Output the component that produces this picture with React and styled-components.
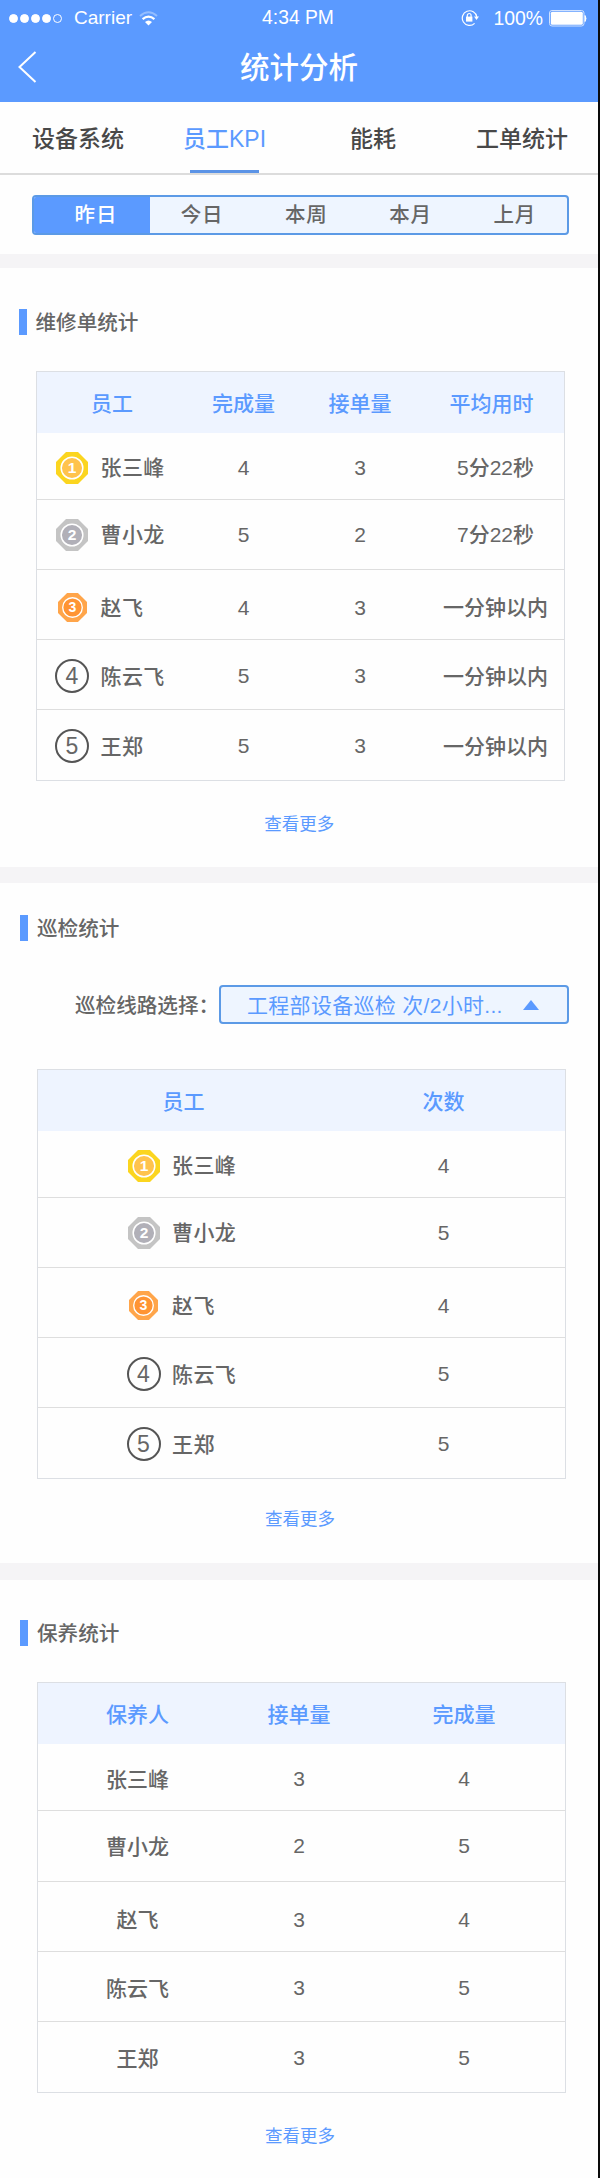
import React, { useState } from 'react';
import styled, { createGlobalStyle } from 'styled-components';

const tabs = [
  { label: '设备系统', width: 156 },
  { label: '员工KPI', width: 137 },
  { label: '能耗', width: 160 },
  { label: '工单统计', width: 138 },
];

const periods = ['昨日', '今日', '本周', '本月', '上月'];

const names = ['张三峰', '曹小龙', '赵飞', '陈云飞', '王郑'];
const repairRows = [
  ['4', '3', '5分22秒'],
  ['5', '2', '7分22秒'],
  ['4', '3', '一分钟以内'],
  ['5', '3', '一分钟以内'],
  ['5', '3', '一分钟以内'],
];
const patrolRows = [['4'], ['5'], ['4'], ['5'], ['5']];
const maintainRows = [
  ['3', '4'],
  ['2', '5'],
  ['3', '4'],
  ['3', '5'],
  ['3', '5'],
];

const medals = [
  { outer: '#fbd51f', inner: '#ffc34d', size: 32 },
  { outer: '#c4c4c4', inner: '#b1b0b8', size: 32 },
  { outer: '#ffa54a', inner: '#ff9433', size: 29 },
];

function Rank({ rank }) {
  const medal = medals[rank - 1];
  if (!medal) {
    return <Circle>{rank}</Circle>;
  }
  return (
    <Medal width={medal.size} height={medal.size} viewBox="0 0 32 32">
      <polygon
        points="10,0 22,0 32,10 32,22 22,32 10,32 0,22 0,10"
        fill={medal.outer}
      />
      <circle
        cx="16"
        cy="16"
        r="10.8"
        fill={medal.inner}
        stroke="#fff"
        strokeWidth="1.5"
      />
      <text x="16" y="21.4" textAnchor="middle">
        {rank}
      </text>
    </Medal>
  );
}

function RankTable({ columns, heads, rows, ranked, padLeft, heights, tops }) {
  return (
    <Table>
      <HeadRow $columns={columns}>
        {heads.map(head => (
          <Cell key={head}>{head}</Cell>
        ))}
      </HeadRow>
      {rows.map((row, i) => (
        <Row
          key={names[i]}
          $columns={columns}
          $height={heights[i]}
          $top={tops[i]}
        >
          {ranked ? (
            <Person $left={padLeft}>
              <RankSlot>
                <Rank rank={i + 1} />
              </RankSlot>
              <Name>{names[i]}</Name>
            </Person>
          ) : (
            <Cell $bottom={3}>{names[i]}</Cell>
          )}
          {row.map((value, j) => (
            <Cell key={j} $left={j === 2 ? 8 : 0} $bottom={j === 2 ? 3 : 0}>
              {value}
            </Cell>
          ))}
        </Row>
      ))}
    </Table>
  );
}

export default function App() {
  const [tab, setTab] = useState('员工KPI');
  const [period, setPeriod] = useState('昨日');

  return (
    <Page>
      <GlobalStyle />
      <Header>
        <StatusBar>
          <Carrier>
            <Signal>
              <Dot $full />
              <Dot $full />
              <Dot $full />
              <Dot $full />
              <Dot />
            </Signal>
            Carrier
            <svg width="19" height="15" viewBox="0 0 19 15" fill="none">
              <path
                d="M1 5Q9.5 -2.5 18 5"
                stroke="#fff"
                strokeOpacity="0.35"
                strokeWidth="2"
              />
              <path d="M3.6 8.2Q9.5 3 15.4 8.2" stroke="#fff" strokeWidth="2.2" />
              <path d="M6 11Q9.5 8 13 11L9.5 14.6Z" fill="#fff" />
            </svg>
          </Carrier>
          <Clock>4:34 PM</Clock>
          <Power>
            <svg width="18" height="18" viewBox="0 0 18 18" fill="none">
              <path
                d="M13.6 14.4A7.3 7.3 0 1 1 15.8 8"
                stroke="#fff"
                strokeWidth="1.2"
              />
              <path d="M13 7.6H18L15.5 11Z" fill="#fff" />
              <rect x="5" y="7.6" width="6.4" height="5" fill="#fff" />
              <path
                d="M6.3 8V6.4A1.9 1.9 0 0 1 10.1 6.4V8"
                stroke="#fff"
                strokeWidth="1.2"
              />
            </svg>
            <Percent>100%</Percent>
            <svg width="38" height="17" viewBox="0 0 38 17">
              <rect
                x="0.5"
                y="0.5"
                width="34.5"
                height="15.5"
                rx="2.5"
                fill="none"
                stroke="#cfe1ff"
              />
              <rect x="1.8" y="1.8" width="32" height="13" rx="1.5" fill="#fff" />
              <path d="M36 5.5Q38 8.5 36 11.5Z" fill="#fff" stroke="#fff" />
            </svg>
          </Power>
        </StatusBar>
        <NavBar>
          <Back width="19" height="32" viewBox="0 0 19 32">
            <path d="M17.5 1L1.5 16L17.5 31" />
          </Back>
          <Title>统计分析</Title>
        </NavBar>
      </Header>

      <Tabs>
        {tabs.map(({ label, width }) => (
          <Tab
            key={label}
            $width={width}
            $active={label === tab}
            onClick={() => setTab(label)}
          >
            {label}
          </Tab>
        ))}
      </Tabs>

      <Filter>
        <Periods>
          {periods.map(item => (
            <Period
              key={item}
              $active={item === period}
              onClick={() => setPeriod(item)}
            >
              {item}
            </Period>
          ))}
        </Periods>
      </Filter>
      <Band $height={14} />

      <Section $height={599} $left={0.5}>
        <SectionTitle $top={41}>维修单统计</SectionTitle>
        <TableWrap $top={36}>
          <RankTable
            columns="151px 112px 121px 142px"
            heads={['员工', '完成量', '接单量', '平均用时']}
            rows={repairRows}
            ranked
            padLeft={18}
            heights={[66, 70, 70, 70, 71]}
            tops={[3, 0, 6, 3, 2]}
          />
        </TableWrap>
        <More $top={30}>查看更多</More>
      </Section>
      <Band $height={16} />

      <Section $height={680} $left={2}>
        <SectionTitle $top={32}>巡检统计</SectionTitle>
        <RouteRow>
          <RouteLabel>巡检线路选择：</RouteLabel>
          <Select>
            <span>工程部设备巡检 次/2小时...</span>
            <Arrow />
          </Select>
        </RouteRow>
        <TableWrap $top={45}>
          <RankTable
            columns="291px 229px"
            heads={['员工', '次数']}
            rows={patrolRows}
            ranked
            padLeft={88}
            heights={[66, 70, 70, 70, 71]}
            tops={[3, 0, 6, 3, 2]}
          />
        </TableWrap>
        <More $top={27}>查看更多</More>
      </Section>
      <Band $height={17} />

      <Section $height={598} $left={2}>
        <SectionTitle $top={40}>保养统计</SectionTitle>
        <TableWrap $top={36}>
          <RankTable
            columns="199px 124px 206px"
            heads={['保养人', '接单量', '完成量']}
            rows={maintainRows}
            heights={[66, 71, 70, 70, 71]}
            tops={[4, 0, 6, 3, 2]}
          />
        </TableWrap>
        <More $top={30}>查看更多</More>
      </Section>
    </Page>
  );
}

const GlobalStyle = createGlobalStyle`
  * {
    box-sizing: border-box;
  }
  body {
    margin: 0;
    background: #fefefe;
    color: #666;
    font-family: 'Liberation Sans', 'Noto Sans CJK SC', sans-serif;
    font-size: 21px;
    font-weight: 500;
  }
  button {
    border: 0;
    padding: 0;
    background: none;
    color: inherit;
    font: inherit;
  }
`;

const Page = styled.div`
  width: 600px;
  height: 2178px;
  overflow: hidden;
  border-right: 2px solid #0b0b0b;
`;

const Header = styled.header`
  height: 102px;
  background: #5b9aff;
  color: #fff;
`;

const StatusBar = styled.div`
  display: grid;
  grid-template-columns: 1fr auto 1fr;
  align-items: center;
  height: 36px;
  padding: 0 11px 0 9px;
  font-size: 19px;
`;

const Carrier = styled.div`
  display: flex;
  align-items: center;
  gap: 7px;
`;

const Signal = styled.div`
  display: flex;
  gap: 2px;
  margin-right: 5px;
`;

const Dot = styled.i`
  width: 9px;
  height: 9px;
  border: 1px solid #fff;
  border-radius: 50%;
  background: ${({ $full }) => ($full ? '#fff' : 'transparent')};
`;

const Clock = styled.div`
  font-size: 19.3px;
`;

const Power = styled.div`
  display: flex;
  align-items: center;
  justify-content: flex-end;
`;

const Percent = styled.span`
  margin: 0 6px 0 14px;
  font-size: 19.4px;
`;

const NavBar = styled.div`
  display: grid;
  grid-template-columns: 60px 1fr 60px;
  align-items: center;
  height: 62px;
`;

const Back = styled.svg`
  margin-left: 18px;
  fill: none;
  stroke: #fff;
  stroke-width: 2;
`;

const Title = styled.h1`
  margin: 0;
  padding-top: 2px;
  font-size: 29.5px;
  font-weight: 500;
  line-height: 40px;
  text-align: center;
`;

const Tabs = styled.nav`
  display: flex;
  height: 73px;
  border-bottom: 2px solid #dcdcdc;
`;

const Tab = styled.button`
  display: flex;
  flex-direction: column;
  align-items: center;
  justify-content: space-between;
  width: ${({ $width }) => $width}px;
  padding-top: 20px;
  color: ${({ $active }) => ($active ? '#5b9aff' : '#484848')};
  font-size: 23px;
  line-height: 35px;
  white-space: nowrap;

  &::after {
    content: '';
    width: 69px;
    height: 3px;
    background: ${({ $active }) => ($active ? '#5b93e6' : 'transparent')};
  }
`;

const Filter = styled.div`
  height: 79px;
  padding: 20px 29px 0 32px;
`;

const Periods = styled.div`
  display: flex;
  height: 40px;
  overflow: hidden;
  border: 2px solid #5c9ae6;
  border-radius: 4px;
  background: #eef5ff;
`;

const Period = styled.button`
  flex: ${({ $active }) => ($active ? '0 0 116px' : '1')};
  padding: 0 0 4px ${({ $active }) => ($active ? '8px' : '0')};
  background: ${({ $active }) => ($active ? '#5b9aff' : 'transparent')};
  color: ${({ $active }) => ($active ? '#fff' : '#666')};
  font-size: 20.5px;
  font-weight: 500;
  letter-spacing: 1px;
`;

const Band = styled.div`
  height: ${({ $height }) => $height}px;
  background: #f5f4f6;
`;

const Section = styled.section`
  display: flow-root;
  height: ${({ $height }) => $height}px;
  padding-left: ${({ $left }) => $left}px;
`;

const SectionTitle = styled.h2`
  display: flex;
  align-items: center;
  gap: 9px;
  height: 26px;
  margin: ${({ $top }) => $top}px 0 0 18px;
  font-size: 20.6px;
  font-weight: 500;
  line-height: 29px;

  &::before {
    content: '';
    width: 8px;
    height: 26px;
    background: #5b9aff;
  }
`;

const TableWrap = styled.div`
  padding: ${({ $top }) => $top}px 0 0 35px;
`;

const Table = styled.div`
  width: 529px;
  border: 1px solid #dcdfe4;
`;

const HeadRow = styled.div`
  display: grid;
  grid-template-columns: ${({ $columns }) => $columns};
  align-items: center;
  height: 61px;
  padding-bottom: 2px;
  background: #eef4ff;
  color: #5b9aff;
`;

const Row = styled.div`
  display: grid;
  grid-template-columns: ${({ $columns }) => $columns};
  align-items: center;
  height: ${({ $height }) => $height}px;
  padding-top: ${({ $top }) => $top}px;

  & + & {
    border-top: 1px solid #dedede;
  }
`;

const Cell = styled.div`
  padding-left: ${({ $left }) => $left || 0}px;
  padding-bottom: ${({ $bottom }) => $bottom || 0}px;
  text-align: center;
  white-space: nowrap;
`;

const Person = styled.div`
  display: flex;
  align-items: center;
  gap: 11px;
  padding-left: ${({ $left }) => $left}px;
`;

const Name = styled.span`
  padding-bottom: 3px;
  letter-spacing: 0.4px;
`;

const RankSlot = styled.span`
  display: flex;
  justify-content: center;
  width: 35px;
`;

const Medal = styled.svg`
  text {
    fill: #fff;
    font-size: 15.5px;
    font-weight: 700;
  }
`;

const Circle = styled.span`
  display: flex;
  align-items: center;
  justify-content: center;
  width: 34px;
  height: 34px;
  border: 2px solid #555;
  border-radius: 50%;
  font-size: 23px;
  line-height: 30px;
`;

const More = styled.a`
  display: block;
  padding-top: ${({ $top }) => $top}px;
  color: #5b9aff;
  font-size: 17.5px;
  font-weight: 400;
  line-height: 26px;
  text-align: center;
`;

const RouteRow = styled.div`
  display: flex;
  align-items: center;
  margin-top: 44px;
  padding-left: 73px;
`;

const RouteLabel = styled.span`
  width: 144px;
  padding-bottom: 2px;
  font-size: 20.6px;
  white-space: nowrap;
`;

const Select = styled.div`
  display: flex;
  align-items: center;
  justify-content: space-between;
  width: 350px;
  height: 39px;
  padding: 0 28px 0 26px;
  border: 2px solid #5c9ae6;
  border-radius: 4px;
  background: #eef5ff;
  color: #5b9aff;
  font-weight: 400;
  letter-spacing: 0.3px;
  white-space: nowrap;

  span {
    padding-bottom: 2px;
  }
`;

const Arrow = styled.i`
  border: 8px solid transparent;
  border-top: 0;
  border-bottom: 10px solid #5b9aff;
`;
